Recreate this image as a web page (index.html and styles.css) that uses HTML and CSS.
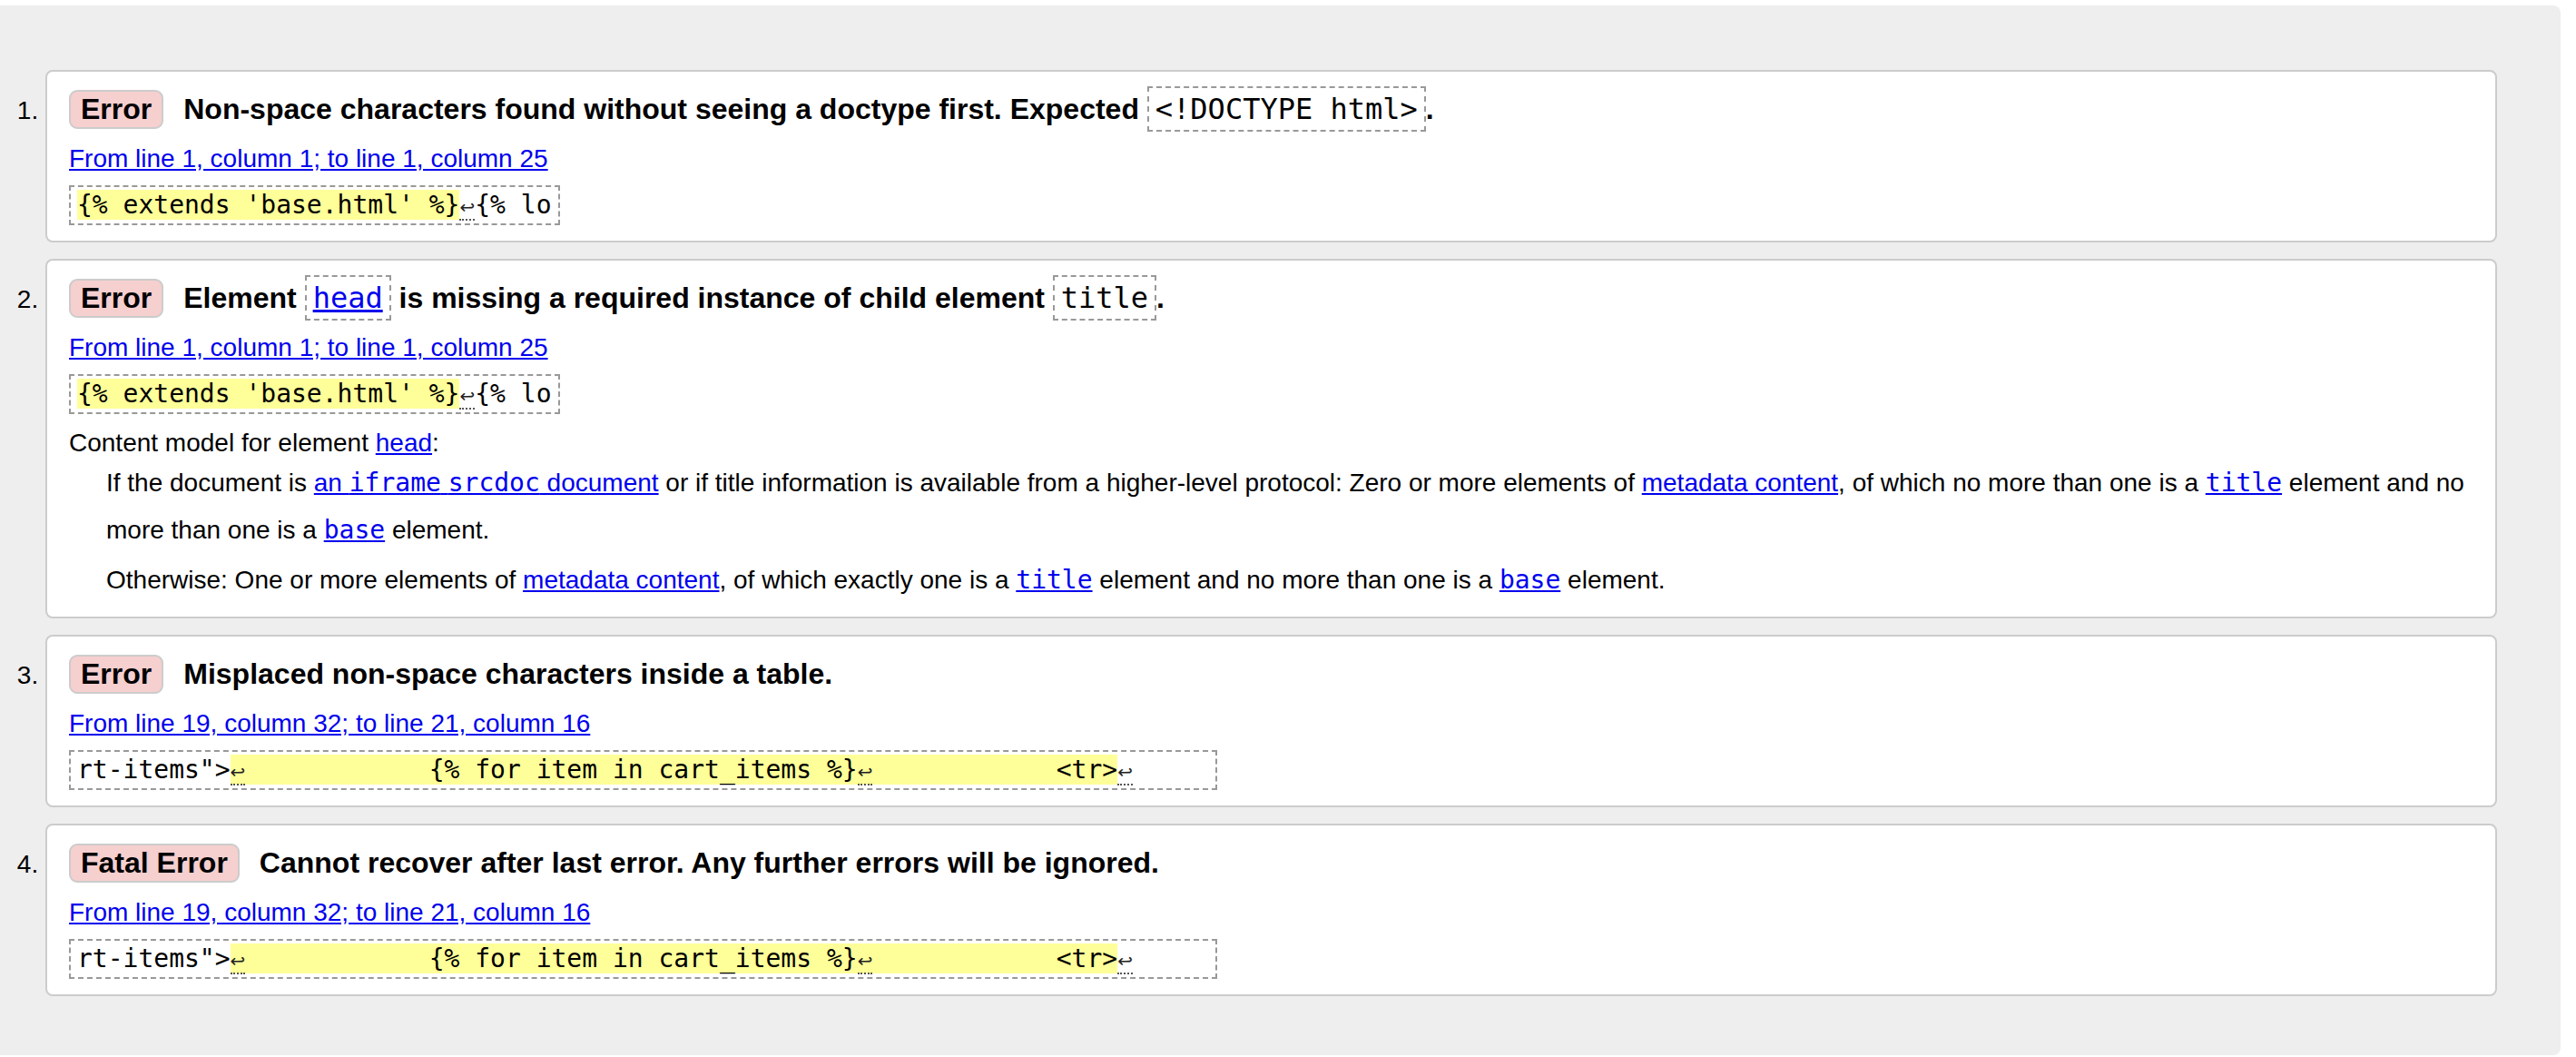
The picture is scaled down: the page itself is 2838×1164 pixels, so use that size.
FILE: index.html
```html
<!DOCTYPE html>
<html lang="en">
<head>
<meta charset="utf-8">
<title>Validation results</title>
<link rel="stylesheet" href="styles.css">
</head>
<body>
<div class="panel">
  <ol class="results">
    <li class="card">
      <div class="msg"><strong class="badge">Error</strong><span class="text">Non-space characters found without seeing a doctype first. Expected <code>&lt;!DOCTYPE html&gt;</code>.</span></div>
      <p class="loc"><a href="#">From line 1, column 1; to line 1, column 25</a></p>
      <p class="extract"><b>{% extends 'base.html' %}</b><span class="lf">↩</span>{% lo</p>
    </li>
    <li class="card card-detail">
      <div class="msg"><strong class="badge">Error</strong><span class="text">Element <code><a href="#">head</a></code> is missing a required instance of child element <code>title</code>.</span></div>
      <p class="loc"><a href="#">From line 1, column 1; to line 1, column 25</a></p>
      <p class="extract"><b>{% extends 'base.html' %}</b><span class="lf">↩</span>{% lo</p>
      <dl class="model">
        <dt>Content model for element <a href="#">head</a>:</dt>
        <dd>
          <p>If the document is <a href="#">an <code>iframe</code> <code>srcdoc</code> document</a> or if title information is available from a higher-level protocol: Zero or more elements of <a href="#">metadata content</a>, of which no more than one is a <a href="#"><code>title</code></a> element and no more than one is a <a href="#"><code>base</code></a> element.</p>
          <p>Otherwise: One or more elements of <a href="#">metadata content</a>, of which exactly one is a <a href="#"><code>title</code></a> element and no more than one is a <a href="#"><code>base</code></a> element.</p>
        </dd>
      </dl>
    </li>
    <li class="card">
      <div class="msg"><strong class="badge">Error</strong><span class="text">Misplaced non-space characters inside a table.</span></div>
      <p class="loc"><a href="#">From line 19, column 32; to line 21, column 16</a></p>
      <p class="extract">rt-items"&gt;<b><span class="lf">↩</span>            {% for item in cart_items %}<span class="lf">↩</span>            &lt;tr&gt;</b><span class="lf">↩</span>     </p>
    </li>
    <li class="card">
      <div class="msg"><strong class="badge">Fatal Error</strong><span class="text">Cannot recover after last error. Any further errors will be ignored.</span></div>
      <p class="loc"><a href="#">From line 19, column 32; to line 21, column 16</a></p>
      <p class="extract">rt-items"&gt;<b><span class="lf">↩</span>            {% for item in cart_items %}<span class="lf">↩</span>            &lt;tr&gt;</b><span class="lf">↩</span>     </p>
    </li>
  </ol>
</div>
</body>
</html>
```

FILE: styles.css
```css
html, body {
  margin: 0;
  padding: 0;
  background: #fff;
}

body {
  font-family: "Liberation Sans", Arial, Helvetica, sans-serif;
  font-size: 28px;
  color: #000;
}

a {
  color: #0000ee;
  text-decoration: underline;
}

code {
  font-family: "DejaVu Sans Mono", "Liberation Mono", monospace;
  font-size: 1em;
}

.panel {
  box-sizing: border-box;
  width: 2821px;
  height: 1156px;
  margin-top: 6px;
  padding: 71px 70px 0 50px;
  background: #eee;
  border-radius: 0 8px 8px 0;
}

.results {
  margin: 0;
  padding: 0;
  list-style: decimal outside;
}

.card {
  background: #fff;
  border: 2px solid #ccc;
  border-radius: 8px;
  padding: 20px 24px 17px;
}

.card + .card {
  margin-top: 18px;
}

.card-detail {
  padding-bottom: 14px;
}

.msg {
  display: flex;
  align-items: baseline;
  gap: 22px;
  font-size: 32px;
  font-weight: bold;
  line-height: 37px;
}

.badge {
  background: #f6cfcf;
  border: 2px solid #ccc;
  border-radius: 9px;
  padding: 1px 11px;
  font-weight: bold;
}

.msg code {
  font-weight: normal;
  border: 2px dashed #999;
  padding: 4px 7px;
}

.loc {
  margin: 13px 0 0;
  line-height: 40px;
}

.extract {
  width: fit-content;
  margin: 9px 0 0;
  padding: 4px 7px;
  border: 2px dashed #999;
  font-family: "DejaVu Sans Mono", "Liberation Mono", monospace;
  font-size: 28px;
  line-height: 32px;
  white-space: pre;
}

.extract b {
  font-weight: normal;
  background: #ffff99;
}

.lf {
  padding-bottom: 1px;
  border-bottom: 2px dotted #555;
  font-family: "DejaVu Sans", sans-serif;
  font-size: 20px;
  line-height: 1;
  color: #222;
}

.model {
  margin: 14px 0 0;
}

.model dt {
  line-height: 36px;
}

.model dd {
  margin: 0 0 0 41px;
}

.model dd p {
  margin: 0;
  line-height: 52px;
}

.model dd p + p {
  margin-top: 3px;
}
```
